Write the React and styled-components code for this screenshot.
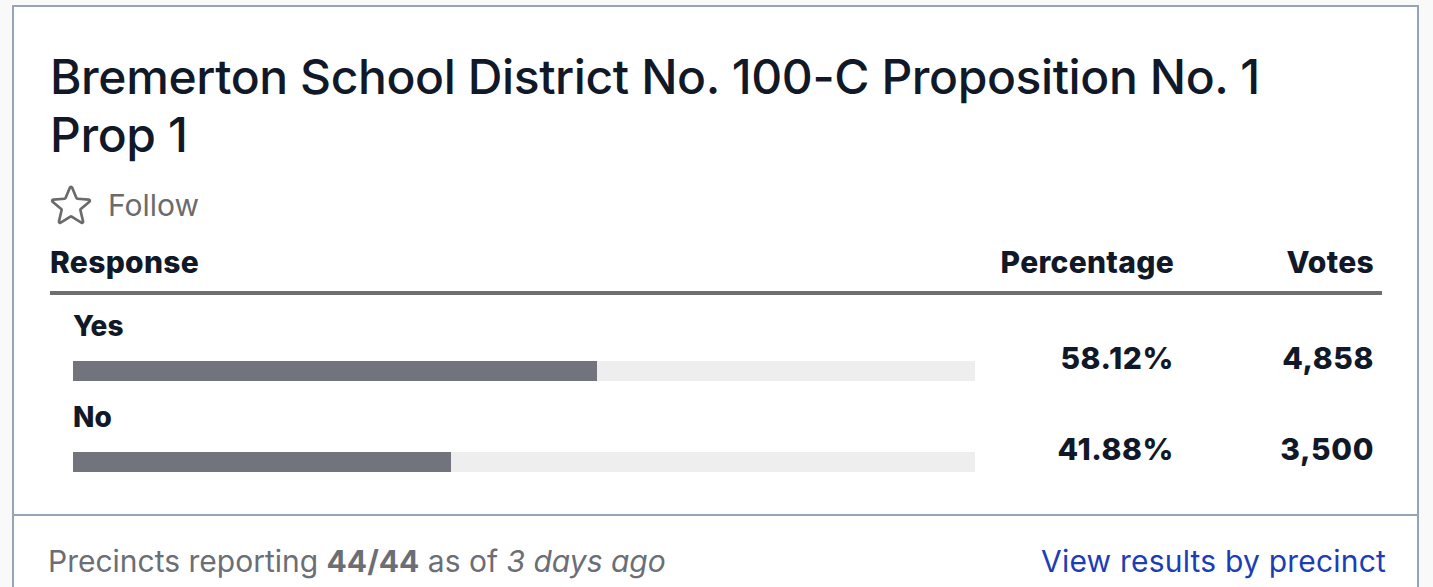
import React from "react";
import styled, { createGlobalStyle } from "styled-components";

const GlobalStyle = createGlobalStyle`
    html, body {
        margin: 0;
        background: #f9f9f9;
    }
    body {
        padding: 5px 14px 0 12px;
        font-family: Inter, "Noto Sans", "Liberation Sans", sans-serif;
        color: #111827;
    }
`;

const results = [
    { response: "Yes", percentage: 58.12, votes: "4,858" },
    { response: "No", percentage: 41.88, votes: "3,500" },
];

const StarIcon = () => (
    <StarSvg viewBox="1.8 1.8 20.4 20.4" fill="none" stroke="currentColor" strokeWidth="1.3" strokeLinejoin="round">
        <path d="M11.48 3.5a.56.56 0 0 1 1.04 0l2.13 5.11a.56.56 0 0 0 .47.35l5.52.44c.5.04.7.66.32.99l-4.2 3.6a.56.56 0 0 0-.18.56l1.28 5.39a.56.56 0 0 1-.84.61l-4.72-2.89a.56.56 0 0 0-.59 0l-4.72 2.89a.56.56 0 0 1-.84-.61l1.28-5.39a.56.56 0 0 0-.18-.56l-4.2-3.6a.56.56 0 0 1 .32-.99l5.52-.44a.56.56 0 0 0 .47-.35l2.13-5.11Z" />
    </StarSvg>
);

const App = () => {
    return (
        <>
            <GlobalStyle />
            <Card>
                <CardBody>
                    <Title>Bremerton School District No. 100-C Proposition No. 1 Prop 1</Title>
                    <FollowButton>
                        <StarIcon />
                        <span>Follow</span>
                    </FollowButton>
                    <ResultsTable>
                        <HeadCell>Response</HeadCell>
                        <HeadCell align="right">Percentage</HeadCell>
                        <HeadCell align="right">Votes</HeadCell>
                        {results.map((row) => (
                            <React.Fragment key={row.response}>
                                <ResponseCell>
                                    <ResponseLabel>{row.response}</ResponseLabel>
                                    <BarTrack>
                                        <BarFill style={{ width: `${row.percentage}%` }} />
                                    </BarTrack>
                                </ResponseCell>
                                <ValueCell>{row.percentage.toFixed(2)}%</ValueCell>
                                <ValueCell>{row.votes}</ValueCell>
                            </React.Fragment>
                        ))}
                    </ResultsTable>
                </CardBody>
                <CardFooter>
                    <Reporting>
                        Precincts reporting <strong>44/44</strong> as of <em>3 days ago</em>
                    </Reporting>
                    <PrecinctLink href="#">View results by precinct</PrecinctLink>
                </CardFooter>
            </Card>
        </>
    );
};

const Card = styled.div`
    background: #ffffff;
    border: 2px solid #97a3b6;
    height: 640px;
`;

const CardBody = styled.div`
    padding: 41px 35px 37px 36px;
`;

const Title = styled.h1`
    margin: 0;
    max-width: 1240px;
    font-size: 48px;
    font-weight: 550;
    line-height: 58px;
    letter-spacing: -0.4px;
    color: #111827;
`;

const FollowButton = styled.div`
    display: flex;
    align-items: center;
    gap: 16px;
    margin-top: 20px;
    color: #6b6b6b;
    font-size: 30px;
    line-height: 40px;
`;

const StarSvg = styled.svg`
    width: 42px;
    height: 42px;
    flex-shrink: 0;
`;

const ResultsTable = styled.div`
    display: grid;
    grid-template-columns: 1fr 200px 200px;
    margin-top: 17px;
`;

const HeadCell = styled.div`
    padding: 0 8px 10px 0;
    border-bottom: 4px solid #6f6f6f;
    text-align: ${(props) => props.align || "left"};
    font-size: 30px;
    font-weight: 800;
    line-height: 38px;
    letter-spacing: 0.3px;
`;

const ResponseCell = styled.div`
    padding: 13px 7px 5px 23px;
`;

const ResponseLabel = styled.div`
    font-size: 28px;
    font-weight: 800;
    line-height: 36px;
    margin-bottom: 17px;
`;

const BarTrack = styled.div`
    height: 20px;
    background: #eeeeee;
`;

const BarFill = styled.div`
    height: 100%;
    background: #71747c;
`;

const ValueCell = styled.div`
    display: flex;
    align-items: flex-end;
    justify-content: flex-end;
    padding: 0 8px 10px 0;
    font-size: 30px;
    font-weight: 800;
    line-height: 36px;
    letter-spacing: 0.6px;
`;

const CardFooter = styled.div`
    display: flex;
    justify-content: space-between;
    align-items: center;
    border-top: 2px solid #97a3b6;
    padding: 25px 31px 0 34px;
    font-size: 30px;
    line-height: 40px;
`;

const Reporting = styled.p`
    margin: 0;
    color: #6b6e75;
    strong {
        font-weight: 700;
        color: #6b6e75;
    }
`;

const PrecinctLink = styled.a`
    color: #1d3db5;
    text-decoration: none;
    letter-spacing: 0.2px;
`;

export default App;
